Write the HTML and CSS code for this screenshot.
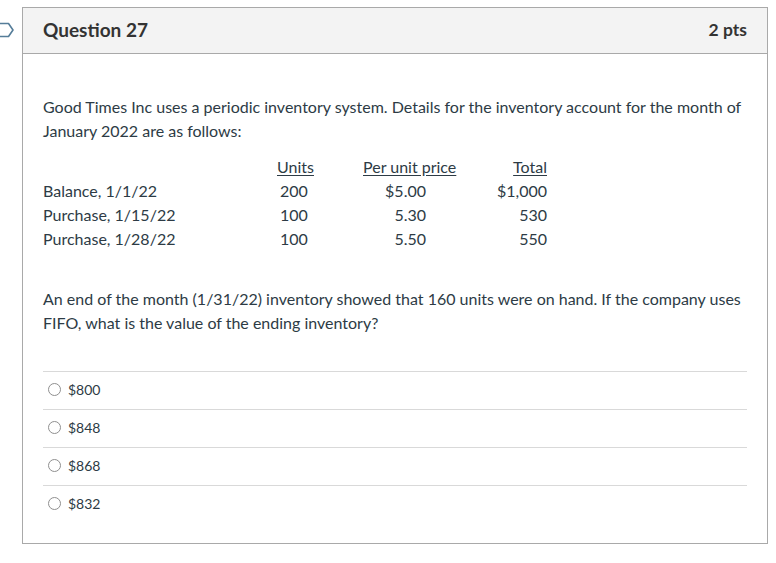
FILE: index.html
```html
<!DOCTYPE html>
<html>
<head>
<meta charset="utf-8">
<link rel="stylesheet" href="styles.css">
</head>
<body>
<div class="page">
  <div class="marker">
    <svg width="22" height="16" viewBox="0 0 22 16"><path d="M-4 1.5 H8.5 L13 8 L8.5 14.5 H-4" fill="none" stroke="#557d99" stroke-width="1.6" stroke-linejoin="round"/></svg>
  </div>
  <div class="card">
    <div class="card-header">
      <span class="title">Question 27</span>
      <span class="pts">2 pts</span>
    </div>
    <div class="card-body">
      <p class="text">Good Times Inc uses a periodic inventory system. Details for the inventory account for the month of January 2022 are as follows:</p>
      <div class="inv">
        <div></div>
        <div class="h units">Units</div>
        <div class="h">Per unit price</div>
        <div class="h right">Total</div>

        <div>Balance, 1/1/22</div>
        <div class="units-v">200</div>
        <div class="price-v">$5.00</div>
        <div class="right">$1,000</div>

        <div>Purchase, 1/15/22</div>
        <div class="units-v">100</div>
        <div class="price-v">5.30</div>
        <div class="right">530</div>

        <div>Purchase, 1/28/22</div>
        <div class="units-v">100</div>
        <div class="price-v">5.50</div>
        <div class="right">550</div>
      </div>
      <p class="text q2">An end of the month (1/31/22) inventory showed that 160 units were on hand. If the company uses FIFO, what is the value of the ending inventory?</p>
      <div class="answers">
        <label class="answer"><span class="radio"></span><span>$800</span></label>
        <label class="answer"><span class="radio"></span><span>$848</span></label>
        <label class="answer"><span class="radio"></span><span>$868</span></label>
        <label class="answer"><span class="radio"></span><span>$832</span></label>
      </div>
    </div>
  </div>
</div>
</body>
</html>
```
FILE: styles.css
```css
* { box-sizing: border-box; }
html, body { margin: 0; padding: 0; background: #fff; }
body {
  font-family: Lato, "Open Sans", sans-serif;
  color: #2d3b45;
}
.page {
  display: flex;
  align-items: flex-start;
  padding-top: 7px;
}
.marker {
  width: 22px;
  flex: none;
  margin-top: 15px;
  line-height: 0;
}
.card {
  width: 746px;
  border: 1px solid #a9a9a9;
  flex: none;
}
.card-header {
  display: flex;
  justify-content: space-between;
  align-items: center;
  height: 46px;
  padding: 0 20px 2px 20px;
  background: #f3f3f3;
  border-bottom: 1px solid #a9a9a9;
  font-weight: 700;
}
.title { font-size: 19px; color: #333; }
.pts { font-size: 17.5px; color: #333; }
.card-body {
  padding: 41px 20px 20px 20px;
}
.text {
  margin: 0;
  font-size: 16px;
  line-height: 24px;
  color: #2d3b45;
}
.inv {
  display: grid;
  grid-template-columns: 234px 86px 93px 91px;
  margin-top: 12px;
  font-size: 16px;
  line-height: 24px;
  color: #2d3b45;
  white-space: nowrap;
}
.inv .h { text-decoration: underline; text-underline-offset: 2px; }
.inv .right { text-align: right; }
.units-v { padding-left: 3px; }
.price-v { text-align: right; padding-right: 30px; }
.q2 { margin-top: 36px; }
.answers { margin-top: 36px; }
.answer {
  display: flex;
  align-items: center;
  height: 38px;
  border-top: 1px solid #d9d9d9;
  font-size: 14px;
  color: #2d3b45;
  padding-left: 5px;
  padding-bottom: 2px;
}
.radio {
  width: 13px;
  height: 13px;
  border: 1px solid #8f8f8f;
  border-radius: 50%;
  margin-right: 7px;
  flex: none;
}
```
